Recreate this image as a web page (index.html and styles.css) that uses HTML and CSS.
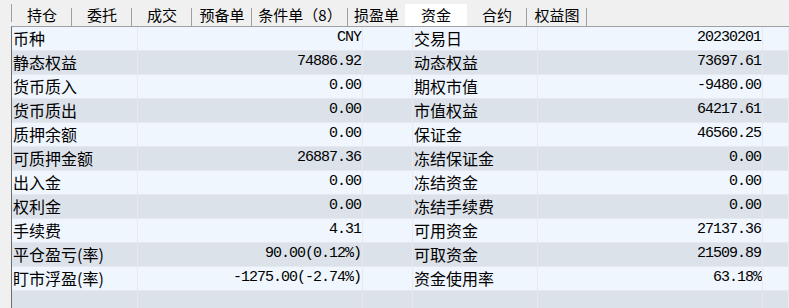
FILE: index.html
```html
<!DOCTYPE html>
<html lang="zh-CN">
<head>
    <meta charset="UTF-8">
    <title>资金</title>
    <link rel="stylesheet" href="styles.css">
</head>
<body>
    <div class="tabs">
        <div class="tab">持仓</div>
        <div class="tab">委托</div>
        <div class="tab">成交</div>
        <div class="tab">预备单</div>
        <div class="tab wide">条件单（8）</div>
        <div class="tab narrow no-sep">损盈单</div>
        <div class="tab active">资金</div>
        <div class="tab">合约</div>
        <div class="tab">权益图</div>
    </div>
    <div class="grid">
        <div class="row">
            <div class="cell label">币种</div><div class="cell num">CNY</div><div class="cell"></div>
            <div class="cell label">交易日</div><div class="cell num">20230201</div><div class="cell"></div>
        </div>
        <div class="row">
            <div class="cell label">静态权益</div><div class="cell num">74886.92</div><div class="cell"></div>
            <div class="cell label">动态权益</div><div class="cell num">73697.61</div><div class="cell"></div>
        </div>
        <div class="row">
            <div class="cell label">货币质入</div><div class="cell num">0.00</div><div class="cell"></div>
            <div class="cell label">期权市值</div><div class="cell num">-9480.00</div><div class="cell"></div>
        </div>
        <div class="row">
            <div class="cell label">货币质出</div><div class="cell num">0.00</div><div class="cell"></div>
            <div class="cell label">市值权益</div><div class="cell num">64217.61</div><div class="cell"></div>
        </div>
        <div class="row">
            <div class="cell label">质押余额</div><div class="cell num">0.00</div><div class="cell"></div>
            <div class="cell label">保证金</div><div class="cell num">46560.25</div><div class="cell"></div>
        </div>
        <div class="row">
            <div class="cell label">可质押金额</div><div class="cell num">26887.36</div><div class="cell"></div>
            <div class="cell label">冻结保证金</div><div class="cell num">0.00</div><div class="cell"></div>
        </div>
        <div class="row">
            <div class="cell label">出入金</div><div class="cell num">0.00</div><div class="cell"></div>
            <div class="cell label">冻结资金</div><div class="cell num">0.00</div><div class="cell"></div>
        </div>
        <div class="row">
            <div class="cell label">权利金</div><div class="cell num">0.00</div><div class="cell"></div>
            <div class="cell label">冻结手续费</div><div class="cell num">0.00</div><div class="cell"></div>
        </div>
        <div class="row">
            <div class="cell label">手续费</div><div class="cell num">4.31</div><div class="cell"></div>
            <div class="cell label">可用资金</div><div class="cell num">27137.36</div><div class="cell"></div>
        </div>
        <div class="row">
            <div class="cell label">平仓盈亏(率)</div><div class="cell num">90.00(0.12%)</div><div class="cell"></div>
            <div class="cell label">可取资金</div><div class="cell num">21509.89</div><div class="cell"></div>
        </div>
        <div class="row">
            <div class="cell label">盯市浮盈(率)</div><div class="cell num">-1275.00(-2.74%)</div><div class="cell"></div>
            <div class="cell label">资金使用率</div><div class="cell num">63.18%</div><div class="cell"></div>
        </div>
        <div class="row">
            <div class="cell"></div><div class="cell"></div><div class="cell"></div>
            <div class="cell"></div><div class="cell"></div><div class="cell"></div>
        </div>
    </div>
</body>
</html>
```

FILE: styles.css
```css
body {
    margin: 0;
    background: #f0f0f0;
    font-family: "Noto Sans CJK SC", sans-serif;
    color: #000;
    overflow: hidden;
}
.tabs {
    display: flex;
    margin-left: 11px;
    padding-top: 4px;
    height: 22px;
    padding-left: 1px;
    background: linear-gradient(#a0a0a0, #a0a0a0) left 4px / 1px 18px no-repeat;
}
.tab {
    width: 60px;
    height: 22px;
    line-height: 22px;
    font-size: 15px;
    text-align: center;
    box-sizing: border-box;
    background: linear-gradient(#a0a0a0, #a0a0a0) right 4px / 1px 18px no-repeat;
}
.tab.wide {
    width: 96px;
}
.tab.narrow {
    width: 57px;
}
.tab.no-sep {
    background: none;
}
.tab.active {
    width: 62px;
    background: #ffffff;
}
.grid {
    margin-left: 11px;
    border-left: 1px solid #6e6e6e;
    border-top: 1px solid #a0a0a0;
}
.row {
    display: grid;
    grid-template-columns: 126px 225px 50px 125px 225px 1fr;
    height: 24px;
    box-sizing: border-box;
    border-bottom: 1px solid #e6eaef;
    background: #f0f6fd;
}
.row:nth-child(even) {
    background: #dce2ea;
}
.cell {
    border-right: 1px solid #e6eaef;
    line-height: 22px;
    font-size: 16px;
    white-space: nowrap;
    overflow: hidden;
}
.label {
    padding-left: 1px;
}
.num {
    text-align: right;
    padding-right: 1px;
    font-family: "Liberation Mono", monospace;
    font-size: 15px;
    letter-spacing: -1px;
}
```
